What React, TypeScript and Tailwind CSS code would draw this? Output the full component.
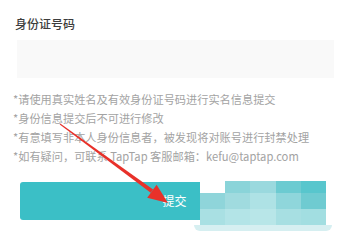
import React from "react";

const notes = [
  "*请使用真实姓名及有效身份证号码进行实名信息提交",
  "*身份信息提交后不可进行修改",
  "*有意填写非本人身份信息者，被发现将对账号进行封禁处理",
  "*如有疑问，可联系 TapTap 客服邮箱：kefu@taptap.com",
];

const mosaicTop = ["bg-[#ffffff]", "bg-[#8ad4d9]", "bg-[#9ad9de]", "bg-[#6ccbd1]", "bg-[#58c6cd]"];
const mosaicMid = ["bg-[#8fd5da]", "bg-[#a0dbdf]", "bg-[#aee2e5]", "bg-[#8fd6db]", "bg-[#6fcbd1]"];
const mosaicBot = ["bg-[#a9e0e3]", "bg-[#b3e4e7]", "bg-[#b8e6e8]", "bg-[#a7dfe2]", "bg-[#a2dee1]"];

export default function App() {
  return (
    <div
      className="relative w-[339px] h-[231px] overflow-hidden bg-white"
      style={{ fontFamily: '"Noto Sans CJK SC", "Noto Sans", sans-serif' }}
    >
      <div className="pl-[15px] pt-[15px] text-[12px] leading-[17px] font-medium text-[#3d3d3d]">身份证号码</div>
      <div className="ml-[17px] mr-[5px] mt-[8px] h-[38px] bg-[#f9f9f9]" />
      <div className="pl-[13px] pt-[12px] flex flex-col">
        {notes.map((n) => (
          <div key={n} className="text-[11.2px] leading-[19px] text-[#a3a3a3] whitespace-nowrap">
            {n}
          </div>
        ))}
      </div>
      <div className="mx-[20px] mt-[16px] w-[306px] h-[38px] rounded-[3px] bg-[#3bbfc6] flex items-center justify-center">
        <span className="text-white text-[12px] ml-[3px]">提交</span>
      </div>
      {/* mosaic overlay */}
      <div className="absolute left-[200px] top-[181px] w-[126px] flex flex-col">
        <div className="grid grid-cols-5 h-[12px]">
          {mosaicTop.map((c, i) => (
            <div key={i} className={c} />
          ))}
        </div>
        <div className="grid grid-cols-5 h-[16px]">
          {mosaicMid.map((c, i) => (
            <div key={i} className={c} />
          ))}
        </div>
        <div className="grid grid-cols-5 h-[16px]">
          {mosaicBot.map((c, i) => (
            <div key={i} className={c} />
          ))}
        </div>
        <div className="h-[6px] mx-[-6px] rounded-b-[6px] bg-[#d6eff1]" />
      </div>
      {/* red arrow */}
      <svg className="absolute left-0 top-0" width="339" height="231" viewBox="0 0 339 231">
        <polygon points="59.7,124.4 60.3,123.6 153.1,189.6 150.7,192.8" fill="#e8312a" />
        <polygon points="156.6,184.7 147.2,197.7 168,203" fill="#e8312a" />
      </svg>
    </div>
  );
}
